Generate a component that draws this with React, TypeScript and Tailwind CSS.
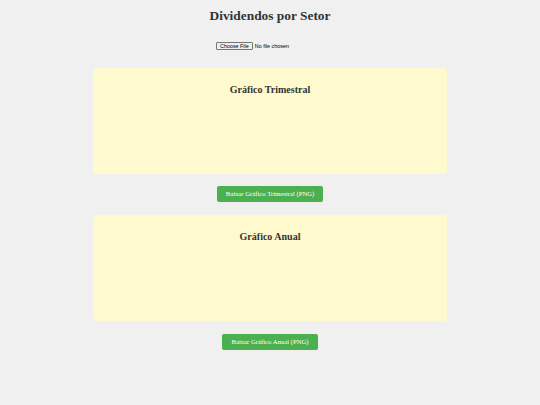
import React from "react";

const serif = { fontFamily: '"Liberation Serif", "Times New Roman", serif' };

function ChartCard({ title }: { title: string }) {
  return (
    <div className="w-[354px] h-[106px] bg-[#fffacd] rounded-[4px] pt-[14px] flex flex-col items-center">
      <h2 className="text-[10px] font-bold text-[#333] leading-[16px]">{title}</h2>
    </div>
  );
}

function DownloadButton({ label }: { label: string }) {
  return (
    <button className="block h-[16px] px-[9px] bg-[#4caf50] text-white text-[6.7px] rounded-[2px] leading-none">
      {label}
    </button>
  );
}

export default function App() {
  return (
    <div
      className="min-h-[405px] w-[540px] bg-[#f0f0f0] flex flex-col items-center"
      style={serif}
    >
      <h1 className="mt-[7px] text-[13.4px] leading-[18px] font-bold text-[#333]">
        Dividendos por Setor
      </h1>
      {/* file picker: fixed-width box, content left-aligned like the native input */}
      <div
        className="mt-[17px] w-[108px] flex items-center gap-[2px] text-[5.4px] text-black"
        style={{ fontFamily: '"Liberation Sans", Arial, sans-serif' }}
      >
        <span className="px-[3px] h-[8px] flex items-center border border-[#767676] bg-[#efefef] rounded-[1px]">
          Choose File
        </span>
        <span>No file chosen</span>
      </div>
      <div className="mt-[18px]">
        <ChartCard title="Gráfico Trimestral" />
      </div>
      <div className="mt-[12px]">
        <DownloadButton label="Baixar Gráfico Trimestral (PNG)" />
      </div>
      <div className="mt-[13px]">
        <ChartCard title="Gráfico Anual" />
      </div>
      <div className="mt-[13px]">
        <DownloadButton label="Baixar Gráfico Anual (PNG)" />
      </div>
    </div>
  );
}
